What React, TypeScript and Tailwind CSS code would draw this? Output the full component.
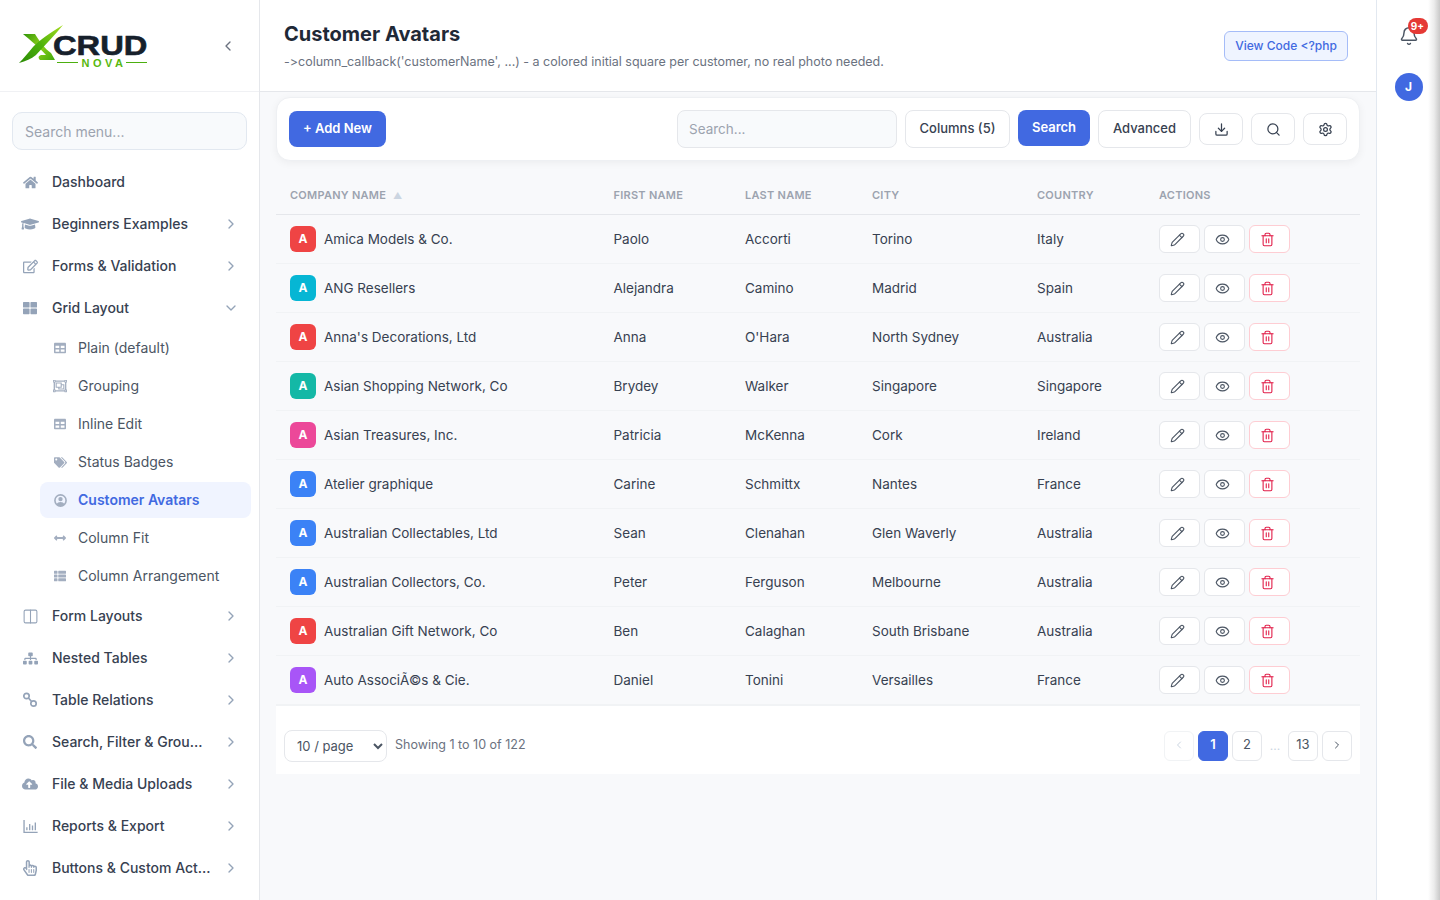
import { Bell, ChevronDown, ChevronLeft, ChevronRight, Columns2, Download, Eye, Pencil, Search, Settings, Trash2 } from "lucide-react";
import { AiOutlineBarChart } from "react-icons/ai";
import {
  FaArrowsAltH,
  FaCloudUploadAlt,
  FaGraduationCap,
  FaHome,
  FaRegEdit,
  FaRegHandPointer,
  FaRegObjectGroup,
  FaSearch,
  FaSitemap,
  FaTable,
  FaTags,
  FaThLarge,
  FaThList,
} from "react-icons/fa";

const rows = [
  { color: "bg-[#ef4444]", company: "Amica Models & Co.", first: "Paolo", last: "Accorti", city: "Torino", country: "Italy" },
  { color: "bg-[#06b6d4]", company: "ANG Resellers", first: "Alejandra", last: "Camino", city: "Madrid", country: "Spain" },
  { color: "bg-[#ef4444]", company: "Anna's Decorations, Ltd", first: "Anna", last: "O'Hara", city: "North Sydney", country: "Australia" },
  { color: "bg-[#14b8a6]", company: "Asian Shopping Network, Co", first: "Brydey", last: "Walker", city: "Singapore", country: "Singapore" },
  { color: "bg-[#ec4899]", company: "Asian Treasures, Inc.", first: "Patricia", last: "McKenna", city: "Cork", country: "Ireland" },
  { color: "bg-[#3b82f6]", company: "Atelier graphique", first: "Carine", last: "Schmittx", city: "Nantes", country: "France" },
  { color: "bg-[#3b82f6]", company: "Australian Collectables, Ltd", first: "Sean", last: "Clenahan", city: "Glen Waverly", country: "Australia" },
  { color: "bg-[#3b82f6]", company: "Australian Collectors, Co.", first: "Peter", last: "Ferguson", city: "Melbourne", country: "Australia" },
  { color: "bg-[#ef4444]", company: "Australian Gift Network, Co", first: "Ben", last: "Calaghan", city: "South Brisbane", country: "Australia" },
  { color: "bg-[#a855f7]", company: "Auto AssociÃ©s & Cie.", first: "Daniel", last: "Tonini", city: "Versailles", country: "France" },
];

function LinkIcon() {
  return (
    <svg width="16" height="16" viewBox="0 0 16 16" fill="none" stroke="currentColor" strokeWidth="1.7">
      <circle cx="4.5" cy="4" r="2.7" />
      <circle cx="11.5" cy="11.5" r="2.7" />
      <path d="M6.5 6l3 3.5" />
    </svg>
  );
}

function UserRingIcon() {
  return (
    <svg width="13" height="13" viewBox="0 0 13 13" fill="currentColor">
      <circle cx="6.5" cy="6.5" r="5.6" fill="none" stroke="currentColor" strokeWidth="1.6" />
      <circle cx="6.5" cy="5.1" r="2.2" />
      <path d="M2.6 10.4c.7-1.6 2.2-2.4 3.9-2.4s3.2.8 3.9 2.4L8.6 12H4.4z" />
    </svg>
  );
}

function Logo() {
  return (
    <div className="relative h-[48px] w-[132px]">
      <svg className="absolute left-0 top-0" width="64" height="48" viewBox="0 0 64 48">
        <defs>
          <linearGradient id="armA" x1="45" y1="3" x2="1" y2="41" gradientUnits="userSpaceOnUse">
            <stop offset="0" stopColor="#a8dc1e" />
            <stop offset="0.5" stopColor="#4fb30c" />
            <stop offset="1" stopColor="#2a8a05" />
          </linearGradient>
          <linearGradient id="armB" x1="5" y1="12" x2="37" y2="38" gradientUnits="userSpaceOnUse">
            <stop offset="0" stopColor="#2f9408" />
            <stop offset="0.5" stopColor="#8fd21a" />
            <stop offset="1" stopColor="#3fa80a" />
          </linearGradient>
        </defs>
        <path d="M5 12h12c5 8 10 15 16 19l4 7H22c-2-2-2-4 1-5h5C20 24 12 18 5 12z" fill="url(#armB)" />
        <path d="M45 3C33 10 22 18 15 25 10 31 5 37 1 41c7-2 12-4 17-8C27 23 37 13 45 3z" fill="url(#armA)" />
      </svg>
      <span className="absolute left-[35px] top-[13px] origin-left font-['Liberation_Sans',sans-serif] text-[27px] leading-[22px] font-bold text-[#16202b] [-webkit-text-stroke:0.6px_#16202b] [transform:scaleX(1.21)]">
        CRUD
      </span>
      <div className="absolute left-[39px] top-[36px] flex h-[10px] w-[90px] items-center">
        <div className="h-px flex-1 bg-[#4caf0f]" />
        <span className="ml-1 font-['Liberation_Sans',sans-serif] text-[11px] leading-[10px] font-bold tracking-[3.5px] text-[#58b80f]">NOVA</span>
        <div className="h-px flex-1 bg-[#4caf0f]" />
      </div>
    </div>
  );
}

function NavItem({ icon, label, open }: { icon: React.ReactNode; label: string; open?: boolean }) {
  return (
    <div className="flex h-10 items-center pl-[20px] pr-[20px] text-[14px] font-medium text-[#374151]">
      <span className="flex w-5 shrink-0 items-center justify-center text-[#94a3b8]">{icon}</span>
      <span className="mb-0.5 ml-[12px] w-[159px] truncate">{label}</span>
      {open === true && <ChevronDown size={16} className="ml-auto text-[#94a3b8]" />}
      {open === false && <ChevronRight size={16} className="ml-auto text-[#94a3b8]" />}
    </div>
  );
}

function SubItem({ icon, label, active }: { icon: React.ReactNode; label: string; active?: boolean }) {
  return (
    <div className={`ml-[40px] mr-[8px] flex h-9 items-center rounded-lg pl-[13px] text-[14px] ${active ? "bg-[#f0f4ff] font-semibold text-[#4169e1]" : "text-[#4b5563]"}`}>
      <span className="flex w-[14px] shrink-0 items-center justify-center text-[#a3aec0]">{icon}</span>
      <span className="mb-0.5 ml-[11px]">{label}</span>
    </div>
  );
}

function Sidebar() {
  return (
    <aside className="flex w-[260px] shrink-0 flex-col border-r border-[#e5e7eb] bg-white">
      <div className="flex h-[92px] shrink-0 items-center justify-between border-b border-[#f0f1f4] pl-[18px] pr-[23px]">
        <Logo />
        <ChevronLeft size={16} className="text-[#6b7280]" />
      </div>
      <div className="px-[12px] pt-[20px] pb-[12px]">
        <div className="flex h-[38px] items-center rounded-[10px] border border-[#e2e8f0] bg-[#f8fafc] px-3 text-[14px] text-[#9ca3af]">
          <span>Search menu...</span>
        </div>
      </div>
      <nav className="flex flex-col gap-0.5">
        <NavItem icon={<FaHome size={15} />} label="Dashboard" />
        <NavItem icon={<FaGraduationCap size={18} />} label="Beginners Examples" open={false} />
        <NavItem icon={<FaRegEdit size={15} />} label="Forms & Validation" open={false} />
        <NavItem icon={<FaThLarge size={14} />} label="Grid Layout" open={true} />
        <SubItem icon={<FaTable size={12} />} label="Plain (default)" />
        <SubItem icon={<FaRegObjectGroup size={14} />} label="Grouping" />
        <SubItem icon={<FaTable size={12} />} label="Inline Edit" />
        <SubItem icon={<FaTags size={13} />} label="Status Badges" />
        <SubItem icon={<UserRingIcon />} label="Customer Avatars" active />
        <SubItem icon={<FaArrowsAltH size={12} />} label="Column Fit" />
        <SubItem icon={<FaThList size={12} />} label="Column Arrangement" />
        <NavItem icon={<Columns2 size={17} strokeWidth={1.5} />} label="Form Layouts" open={false} />
        <NavItem icon={<FaSitemap size={15} />} label="Nested Tables" open={false} />
        <NavItem icon={<LinkIcon />} label="Table Relations" open={false} />
        <NavItem icon={<FaSearch size={14} />} label="Search, Filter & Grouping" open={false} />
        <NavItem icon={<FaCloudUploadAlt size={16} />} label="File & Media Uploads" open={false} />
        <NavItem icon={<AiOutlineBarChart size={19} />} label="Reports & Export" open={false} />
        <NavItem icon={<FaRegHandPointer size={16} />} label="Buttons & Custom Actions" open={false} />
      </nav>
    </aside>
  );
}

function Toolbar() {
  return (
    <div className="flex h-[64px] items-center rounded-[14px] border border-[#eef0f3] bg-white pl-[12px] pr-[12px] shadow-[0_2px_8px_rgba(0,0,0,0.05)]">
      <button className="h-9 w-[97px] rounded-lg bg-[#4169e1] text-[13px] font-semibold text-white">+ Add New</button>
      <div className="ml-auto flex h-[38px] w-[220px] items-center rounded-lg border border-[#e5e7eb] bg-[#f8fafc] px-[11px] text-[13.5px] text-[#9ca3af]">
        <span>Search...</span>
      </div>
      <button className="ml-2 h-[38px] w-[105px] rounded-lg border border-[#e5e7eb] bg-white text-[13px] font-medium text-[#374151]">Columns (5)</button>
      <button className="mb-0.5 ml-2 h-9 w-[72px] rounded-lg bg-[#4169e1] text-[13px] font-semibold text-white">Search</button>
      <button className="ml-2 h-[38px] w-[93px] rounded-lg border border-[#e5e7eb] bg-white text-[13px] font-medium text-[#374151]">Advanced</button>
      <button className="ml-2 flex h-8 w-11 items-center justify-center rounded-lg border border-[#e5e7eb] bg-white text-[#374151]"><Download size={15} /></button>
      <button className="ml-2 flex h-8 w-11 items-center justify-center rounded-lg border border-[#e5e7eb] bg-white text-[#374151]"><Search size={15} /></button>
      <button className="ml-2 flex h-8 w-11 items-center justify-center rounded-lg border border-[#e5e7eb] bg-white text-[#374151]"><Settings size={15} /></button>
    </div>
  );
}

function ActionButton({ children, danger }: { children: React.ReactNode; danger?: boolean }) {
  return (
    <button className={`flex h-7 w-[41px] items-center rounded-md border bg-white pl-[10px] ${danger ? "border-[#fecdd3] text-[#e11d48]" : "border-[#e5e7eb] text-[#4b5563]"}`}>
      {children}
    </button>
  );
}

function DataTable() {
  return (
    <table className="w-full table-fixed border-collapse text-left">
      <colgroup>
        <col className="w-[323.5px]" />
        <col className="w-[131.5px]" />
        <col className="w-[127px]" />
        <col className="w-[165px]" />
        <col className="w-[122px]" />
        <col />
      </colgroup>
      <thead>
        <tr className="h-[38px] border-b border-[#e5e7eb] text-[11px] font-semibold tracking-[0.25px] text-[#9ca3af]">
          <th className="px-[14px] font-semibold">
            COMPANY NAME <span className="ml-1 text-[9px] text-[#cbd5e1]">▲</span>
          </th>
          <th className="px-[14px] font-semibold">FIRST NAME</th>
          <th className="px-[14px] font-semibold">LAST NAME</th>
          <th className="px-[14px] font-semibold">CITY</th>
          <th className="px-[14px] font-semibold">COUNTRY</th>
          <th className="px-[14px] font-semibold">ACTIONS</th>
        </tr>
      </thead>
      <tbody className="text-[13.5px] text-[#374151]">
        {rows.map((r) => (
          <tr key={r.company} className="h-[49px] border-b border-[#f1f3f5]">
            <td className="px-[14px]">
              <div className="flex items-center gap-2">
                <div className={`flex h-[26px] w-[26px] items-center justify-center rounded-md text-[12px] font-bold text-white ${r.color}`}>A</div>
                <span className="mt-0.5">{r.company}</span>
              </div>
            </td>
            <td className="px-[14px] pt-0.5">{r.first}</td>
            <td className="px-[14px] pt-0.5">{r.last}</td>
            <td className="px-[14px] pt-0.5">{r.city}</td>
            <td className="px-[14px] pt-0.5">{r.country}</td>
            <td className="px-[14px] pt-px">
              <div className="flex gap-1">
                <ActionButton><Pencil size={15} strokeWidth={1.75} /></ActionButton>
                <ActionButton><Eye size={15} strokeWidth={1.75} /></ActionButton>
                <ActionButton danger><Trash2 size={15} strokeWidth={1.75} /></ActionButton>
              </div>
            </td>
          </tr>
        ))}
      </tbody>
    </table>
  );
}

function PageButton({ children, active, disabled }: { children: React.ReactNode; active?: boolean; disabled?: boolean }) {
  return (
    <button
      className={`flex h-[30px] w-[30px] items-center justify-center rounded-md border pb-0.5 text-[13px] ${
        active ? "border-[#4169e1] bg-[#4169e1] font-semibold text-white" : disabled ? "border-[#f1f3f5] bg-white text-[#cbd5e1]" : "border-[#e5e7eb] bg-white text-[#4b5563]"
      }`}
    >
      {children}
    </button>
  );
}

function Pagination() {
  return (
    <div className="flex h-[69px] items-start border-t border-[#f1f3f5] bg-white pl-2 pr-2 pt-[24px]">
      <select className="h-8 w-[103px] rounded-lg border border-[#e5e7eb] bg-white pl-2 text-[13px] text-[#4b5563]" defaultValue="10">
        <option value="10">10 / page</option>
      </select>
      <span className="ml-2 mt-[6px] text-[12.5px] text-[#6b7280]">Showing 1 to 10 of 122</span>
      <div className="ml-auto mt-px flex items-center gap-1">
        <PageButton disabled><ChevronLeft size={12} /></PageButton>
        <PageButton active>1</PageButton>
        <PageButton>2</PageButton>
        <span className="w-[18px] text-center text-[12px] text-[#cbd5e1]">...</span>
        <PageButton>13</PageButton>
        <PageButton><ChevronRight size={12} /></PageButton>
      </div>
    </div>
  );
}

function RightRail() {
  return (
    <aside className="relative flex w-[64px] shrink-0 flex-col items-center border-l border-[#e2e8f0] bg-white pt-[26px]">
      <div className="relative">
        <Bell size={20} strokeWidth={1.75} className="text-[#4b5563]" />
        <span className="absolute -top-[8px] left-[9px] flex h-[16px] w-[20px] items-center justify-center rounded-full bg-[#e53935] text-[10px] font-bold text-white">9+</span>
      </div>
      <div className="mt-[27px] flex h-7 w-7 items-center justify-center rounded-full bg-[#4169e1] text-[12px] font-bold text-white">J</div>
      <div className="absolute right-0 top-0 h-full w-[12px] bg-linear-to-l from-[#c9c9c9] via-[#ececec] to-transparent" />
    </aside>
  );
}

export default function App() {
  return (
    <div className="flex h-[900px] overflow-hidden bg-white font-['Inter',sans-serif]">
      <Sidebar />
      <main className="flex min-w-0 flex-1 flex-col bg-[#f8f9fb]">
        <header className="flex h-[92px] shrink-0 items-center justify-between border-b border-[#e5e7eb] bg-white pl-[24px] pr-[28px]">
          <div className="mt-px">
            <h1 className="text-[20px] leading-[28px] font-bold text-[#1f2937]">Customer Avatars</h1>
            <p className="mt-[4px] text-[12.5px] leading-[20px] text-[#6b7280] [font-feature-settings:'calt'_0]">-&gt;column_callback('customerName', ...) - a colored initial square per customer, no real photo needed.</p>
          </div>
          <button className="h-[30px] w-[124px] rounded-md border border-[#a5bcf8] bg-[#eff4ff] text-[12px] font-medium text-[#4169e1]">View Code &lt;?php</button>
        </header>
        <div className="px-[16px] pt-[5px]">
          <Toolbar />
          <div className="mt-[15px]">
            <DataTable />
            <Pagination />
          </div>
        </div>
      </main>
      <RightRail />
    </div>
  );
}
